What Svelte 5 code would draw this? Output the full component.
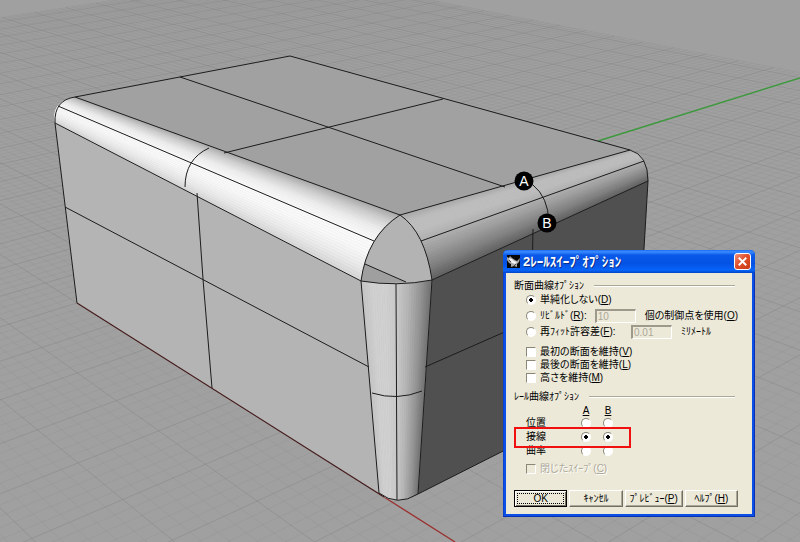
<script lang="ts">
  type Point = [number, number];
  type Curve = [Point, Point, Point];

  // Ground plane: origin and the two vanishing points of the grid
  const origin: Point = [77, 303];
  const vanishX: Point = [-779, -238];
  const vanishY: Point = [1948, -280];
  const stepX = 0.0077;
  const stepY = 0.007;

  function project(u: number, v: number): Point {
    const a = u * stepX;
    const b = v * stepY;
    const w = 1 + a + b;
    return [
      (origin[0] + a * vanishX[0] + b * vanishY[0]) / w,
      (origin[1] + a * vanishX[1] + b * vanishY[1]) / w,
    ];
  }

  const toPath = (points: Point[]) => "M" + points.map((p) => `${p[0].toFixed(1)} ${p[1].toFixed(1)}`).join("L");

  function gridPath(major: boolean) {
    let d = "";
    for (let i = -100; i <= 103; i++) {
      if ((i % 5 === 0) !== major) continue;
      const near = Math.max(-100, (-0.85 - i * stepX) / stepY);
      d += toPath([project(i, near), project(i, 92)]);
    }
    for (let j = -100; j <= 92; j++) {
      if ((j % 5 === 0) !== major) continue;
      const near = Math.max(-100, (-0.85 - j * stepY) / stepX);
      d += toPath([project(near, j), project(103, j)]);
    }
    return d;
  }

  // Point on the quadratic that passes through all three given points
  function onCurve([p, m, q]: Curve, t: number): Point {
    const at = (k: 0 | 1) => {
      const c = 2 * m[k] - (p[k] + q[k]) / 2;
      return (1 - t) * (1 - t) * p[k] + 2 * t * (1 - t) * c + t * t * q[k];
    };
    return [at(0), at(1)];
  }

  function shade(ramp: number[], t: number) {
    const x = t * (ramp.length - 1);
    const i = Math.min(Math.floor(x), ramp.length - 2);
    const g = Math.round(ramp[i] + (ramp[i + 1] - ramp[i]) * (x - i));
    return `rgb(${g},${g},${g})`;
  }

  // Ruled surface between two profiles, cut into thin shaded strips
  function fillet(far: Curve, near: Curve, ramp: number[]) {
    const n = 28;
    return Array.from({ length: n }, (_, i) => {
      const a = i / n;
      const b = (i + 1) / n;
      return {
        d: toPath([onCurve(far, a), onCurve(far, b), onCurve(near, b), onCurve(near, a)]) + "Z",
        fill: shade(ramp, (a + b) / 2),
      };
    });
  }

  const strips = [
    ...fillet(
      [[75, 97], [58, 106], [55, 123]],
      [[400, 215], [374, 241], [361, 281]],
      [166, 208, 238, 250, 248, 236, 214],
    ),
    ...fillet(
      [[630, 150], [644, 161], [648, 181]],
      [[400, 215], [421, 241], [432, 280]],
      [168, 190, 190, 176, 156, 130, 96],
    ),
    ...fillet(
      [[361, 281], [397, 284], [432, 280]],
      [[379, 493], [397, 500], [418, 494]],
      [196, 208, 208, 200, 180, 150, 112],
    ),
  ];

  const minorGrid = gridPath(false);
  const majorGrid = gridPath(true);

  const markers = [
    { name: "A", x: 524, y: 181 },
    { name: "B", x: 547, y: 223 },
  ];

  const keepOptions = [
    { id: "first", text: "最初の断面を維持", key: "V" },
    { id: "last", text: "最後の断面を維持", key: "L" },
    { id: "height", text: "高さを維持", key: "M" },
  ];

  const continuity = [
    { id: "position", text: "位置" },
    { id: "tangency", text: "接線" },
    { id: "curvature", text: "曲率" },
  ];

  let section = $state("asis");
  let railA = $state("tangency");
  let railB = $state("tangency");
</script>

<main>
  <svg class="scene" viewBox="0 0 800 542" role="img" aria-label="Rhino viewport">
    <rect width="800" height="542" fill="#a0a0a0" />
    <path d={minorGrid} class="minor" />
    <path d={majorGrid} class="major" />
    <path d="M598 141L800 78" stroke="#3f9a3f" stroke-width="1.4" />
    <path d="M384 497L455 542" stroke="#9c3030" stroke-width="1.3" />

    <!-- flat faces -->
    <path d="M75 97L290 56L630 150L400 215Z" fill="#a1a1a1" />
    <path d="M55 123L361 281L379 493L77 303Z" fill="#b4b4b4" />
    <path d="M432 280L648 181L636 384L418 494Z" fill="#505050" />

    {#each strips as strip}
      <path d={strip.d} fill={strip.fill} stroke={strip.fill} stroke-width="0.6" />
    {/each}

    <!-- open corner -->
    <path d="M400 215Q367 236 361 281Q397 287 432 280Q425 232 400 215Z" fill="#b3b3b3" />
    <path d="M365 264L406 282Q380 284 361 281Q362 272 365 264Z" fill="#9f9f9f" />

    <g class="edges">
      <path d="M75 97L290 56L630 150L400 215Z" />
      <path d="M180 77L505 187M224 153L443 99" />
      <path d="M75 97Q54 100 55 123L361 281M58 106L374 241" />
      <path d="M55 123L77 303M65 207L369 367" />
      <path d="M209 148Q185 159 185 187M197 193L203 279L212 388" />
      <path d="M400 215Q367 236 361 281Q397 287 432 280Q425 232 400 215" />
      <path d="M365 264L406 282" />
      <path d="M361 281L379 493Q397 507 418 494L432 280M396 284L397 500" />
      <path d="M372 393Q397 401 422 391" />
      <path d="M630 150Q648 155 648 181L432 280M421 241L644 161" />
      <path d="M648 181L636 384L418 494M425 367L600 290M533 229L531 330" />
      <path d="M533 185Q548 197 549 222" />
    </g>
    <path d="M77 303L384 497" stroke="#451a1a" stroke-width="1.1" />

    {#each markers as marker}
      <circle cx={marker.x} cy={marker.y} r="9.5" fill="#000" />
      <text x={marker.x} y={marker.y + 5} class="marker">{marker.name}</text>
    {/each}
  </svg>

  <form class="dialog" onsubmit={(e) => e.preventDefault()}>
    <header class="titlebar">
      <svg class="app-icon" viewBox="0 0 13 13" aria-hidden="true">
        <rect width="13" height="13" fill="#080808" />
        <path d="M0 2L2 3L3 1L5 3L8 5L10 6L13 3L12 7L10 9L10 12L7 11L4 12L4 9L2 8L0 5Z" fill="#a8a8a8" />
        <path d="M2 3L5 4L7 6L10 7L8 9L5 8L3 6Z" fill="#f2f2f2" />
        <path d="M2 5L4 7M7 11L9 9" stroke="#444" />
      </svg>
      <h1>2ﾚｰﾙｽｲｰﾌﾟｵﾌﾟｼｮﾝ</h1>
      <button type="button" class="close" aria-label="閉じる">
        <svg viewBox="0 0 16 16"><path d="M4 4L12 12M12 4L4 12" stroke="#fff" stroke-width="2" /></svg>
      </button>
    </header>

    <div class="body">
      <h2>断面曲線ｵﾌﾟｼｮﾝ</h2>

      <div class="row">
        <input type="radio" id="asis" value="asis" bind:group={section} />
        <label for="asis">単純化しない(<u>D</u>)</label>
      </div>
      <div class="row">
        <input type="radio" id="rebuild" value="rebuild" bind:group={section} />
        <label for="rebuild" class="short">ﾘﾋﾞﾙﾄﾞ(<u>R</u>):</label>
        <input type="text" id="points" value="10" disabled />
        <label for="points">個の制御点を使用(<u>O</u>)</label>
      </div>
      <div class="row">
        <input type="radio" id="refit" value="refit" bind:group={section} />
        <label for="refit" class="long">再ﾌｨｯﾄ許容差(<u>F</u>):</label>
        <input type="text" id="tolerance" value="0.01" disabled />
        <label for="tolerance">ﾐﾘﾒｰﾄﾙ</label>
      </div>

      <div class="checks">
        {#each keepOptions as option}
          <div class="row check">
            <input type="checkbox" id={option.id} />
            <label for={option.id}>{option.text}(<u>{option.key}</u>)</label>
          </div>
        {/each}
      </div>

      <h2>ﾚｰﾙ曲線ｵﾌﾟｼｮﾝ</h2>

      <div class="rails">
        <div class="rail head">
          <span></span>
          <u id="rail-a">A</u>
          <u id="rail-b">B</u>
        </div>
        {#each continuity as item}
          <div class="rail" class:marked={item.id === "tangency"}>
            <span id={item.id}>{item.text}</span>
            <input type="radio" value={item.id} bind:group={railA} aria-labelledby="rail-a {item.id}" />
            <input type="radio" value={item.id} bind:group={railB} aria-labelledby="rail-b {item.id}" />
          </div>
        {/each}
      </div>

      <div class="row closed">
        <input type="checkbox" id="closed" disabled />
        <label for="closed">閉じたｽｲｰﾌﾟ(<u>C</u>)</label>
      </div>

      <footer>
        <button type="submit" class="default">OK</button>
        <button type="button">ｷｬﾝｾﾙ</button>
        <button type="button" class="wide">ﾌﾟﾚﾋﾞｭｰ(<u>P</u>)</button>
        <button type="button">ﾍﾙﾌﾟ(<u>H</u>)</button>
      </footer>
    </div>
  </form>
</main>

<style>
  :global(body) {
    margin: 0;
    background: #a0a0a0;
  }

  main {
    position: relative;
    overflow: hidden;
    font: 10px/12px "Liberation Sans", "Noto Sans CJK JP", sans-serif;
    font-feature-settings: "palt";
    color: #000;
  }

  .scene {
    display: block;
    width: 100%;
    fill: none;
  }

  .minor {
    stroke: #888;
    stroke-width: 0.5;
    opacity: 0.35;
  }

  .major {
    stroke: #808080;
    stroke-width: 0.8;
    opacity: 0.5;
  }

  .edges {
    stroke: #1c1c1c;
    stroke-width: 1;
  }

  .marker {
    fill: #fff;
    font-size: 14px;
    text-anchor: middle;
  }

  .dialog {
    position: absolute;
    left: 503px;
    top: 250px;
    width: 252px;
    box-sizing: border-box;
    padding: 0 3px 3px;
    border-radius: 5px 5px 0 0;
    background: #0a50e6;
    box-shadow: inset -1px -1px #0831b5, inset 1px 0 #0843d0;
  }

  .titlebar {
    display: flex;
    align-items: center;
    gap: 3px;
    height: 23px;
    margin: 0 -3px;
    padding: 0 4px;
    border-radius: 5px 5px 0 0;
    background: linear-gradient(#1c6cf0, #3a8cff 8%, #0a58e8 22%, #0553e4 60%, #0664fa 88%, #0344c4);
  }

  .app-icon {
    width: 13px;
    height: 13px;
  }

  h1 {
    flex: 1;
    margin: 0;
    font-size: 13px;
    line-height: 16px;
    color: #fff;
    text-shadow: 1px 1px #0a2f8c;
    white-space: nowrap;
  }

  .close {
    width: 17px;
    height: 17px;
    padding: 0;
    border: 1px solid #fff;
    border-radius: 3px;
    background: linear-gradient(135deg, #f0907a, #e0502c 45%, #c83a14);
  }

  .close svg {
    display: block;
  }

  .body {
    padding: 7px 14px 7px 8px;
    background: #ece9d8;
    white-space: nowrap;
  }

  h2 {
    display: flex;
    align-items: center;
    gap: 10px;
    margin: 0;
    padding-right: 3px;
    font-size: 10px;
    line-height: 12px;
    font-weight: 400;
  }

  h2::after {
    content: "";
    flex: 1;
    height: 1px;
    background: #aca899;
    border-bottom: 1px solid #fff;
  }

  .row {
    display: flex;
    align-items: center;
    height: 16px;
    padding-left: 12px;
  }

  .row > input:first-child {
    margin-right: 4px;
  }

  .check {
    height: 13px;
  }

  .checks {
    padding: 5px 0 7px;
  }

  .short {
    width: 58px;
  }

  .long {
    width: 91px;
  }

  input {
    appearance: none;
    box-sizing: border-box;
    flex: none;
    width: 10px;
    height: 10px;
    margin: 0;
    border: 1px solid;
    border-color: #8a8778 #fff #fff #8a8778;
    background: #fff;
  }

  input[type="radio"] {
    border-radius: 50%;
  }

  input[type="radio"]:checked {
    background: radial-gradient(circle, #000 0 2px, #fff 2px);
  }

  input[type="text"] {
    width: 41px;
    height: 14px;
    margin-right: 9px;
    padding: 0 1px;
    border-width: 2px 1px 1px 2px;
    border-color: #9d9a8b #fff #fff #9d9a8b;
    background: #ece9d8;
    color: #aca899;
    font: inherit;
  }

  input[type="checkbox"]:disabled {
    background: #ece9d8;
  }

  .rails {
    padding-top: 2px;
  }

  .rail {
    display: grid;
    grid-template-columns: 49px 22px 22px;
    align-items: center;
    justify-items: center;
    width: 103px;
    height: 14px;
    padding-left: 12px;
    position: relative;
  }

  .rail > :first-child {
    justify-self: start;
  }

  .head {
    height: 11px;
  }

  .marked::after {
    content: "";
    position: absolute;
    inset: -3px -2px -4px 0;
    border: 2px solid #f01010;
    z-index: 1;
    pointer-events: none;
  }

  .closed {
    height: 14px;
    padding-top: 4px;
    padding-bottom: 14px;
    color: #aca899;
    text-shadow: 1px 1px #fff;
  }

  footer {
    display: flex;
    gap: 2px;
  }

  footer button {
    flex: 53;
    height: 17px;
    padding: 0;
    border: 1px solid;
    border-color: #fff #716f64 #716f64 #fff;
    box-shadow: inset -1px -1px #aca899;
    background: #ece9d8;
    color: #000;
    font: inherit;
    font-feature-settings: inherit;
  }

  footer .wide {
    flex: 58;
  }

  footer .default {
    border-color: #000;
    outline: 1px dotted #000;
    outline-offset: -4px;
    box-shadow: inset 1px 1px #fff, inset -1px -1px #716f64;
  }
</style>
